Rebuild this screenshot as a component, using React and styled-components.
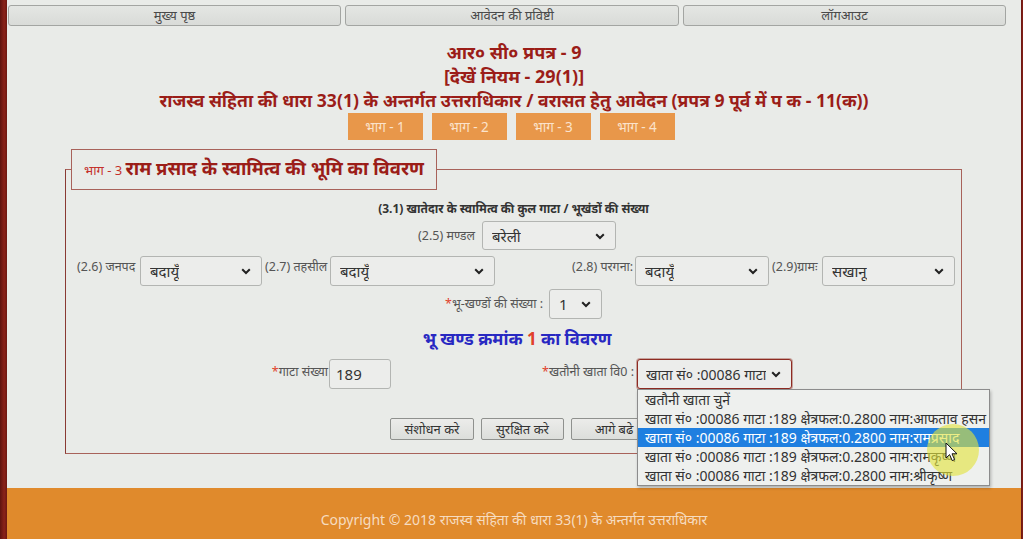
import React from "react";
import styled, { createGlobalStyle } from "styled-components";

const GlobalStyle = createGlobalStyle`
  html, body {
    margin: 0;
    padding: 0;
    background: #ffffff;
  }
  body {
    font-family: "Noto Sans", "Liberation Sans", sans-serif;
  }
`;

const Screen = styled.div`
  display: flex;
  width: 1024px;
  height: 539px;
  overflow: hidden;
  position: relative;
  background: #ffffff;
`;

const Edge = styled.div`
  width: ${(p) => p.w}px;
  flex-shrink: 0;
  background: linear-gradient(90deg, #5e130f, #8a2219 60%, #6d1812);
`;

const Page = styled.div`
  width: 1014px;
  display: flex;
  flex-direction: column;
  background: #e9ebe8;
`;

const Nav = styled.nav`
  display: grid;
  grid-template-columns: 333px 334px 323px;
  gap: 4px;
  padding: 5px 0 0 1px;
`;

const NavButton = styled.button`
  height: 21px;
  padding: 0;
  border: 1px solid #a3a5a2;
  border-radius: 3px;
  background: linear-gradient(#e4e6e3, #d9dbd8);
  color: #4a4a4a;
  font-family: inherit;
  font-size: 13px;
  line-height: 19px;
`;

const Header = styled.header`
  margin-top: 14px;
  text-align: center;
  color: #9b1d18;
  font-weight: 700;
`;

const TitleLine = styled.div`
  font-size: ${(p) => p.size || 18}px;
  line-height: 24px;
`;

const Tabs = styled.div`
  display: flex;
  justify-content: center;
  gap: 9px;
  margin-top: 1px;
  padding-right: 6px;
`;

const Tab = styled.div`
  width: 75px;
  height: 27px;
  display: flex;
  align-items: center;
  justify-content: center;
  background: #e8974a;
  color: #fbe3cc;
  font-size: 13.5px;
`;

const Fieldset = styled.fieldset`
  margin: 9px 0 0 58px;
  width: 897px;
  box-sizing: border-box;
  height: 305px;
  padding: 0;
  border: 1px solid #a8625a;
  border-left-color: #8a3a33;
  min-width: 0;
`;

const Legend = styled.legend`
  margin-left: 5px;
  padding: 6px 12px 7px 12px;
  border: 1px solid #a8625a;
  color: #9b1d18;
  font-size: 18.5px;
  font-weight: 700;
  line-height: 24px;
`;

const LegendPart = styled.span`
  color: #c4302b;
  font-size: 13px;
  font-weight: 400;
`;

const Caption = styled.div`
  margin-top: 11px;
  text-align: center;
  font-size: 12px;
  font-weight: 700;
  color: #333;
  line-height: 16px;
`;

const CenterRow = styled.div`
  display: flex;
  justify-content: center;
  align-items: center;
  gap: ${(p) => p.gap || 6}px;
  margin-top: ${(p) => p.top || 0}px;
  padding-left: ${(p) => p.shift || 0}px;
`;

const SplitRow = styled.div`
  display: flex;
  justify-content: space-between;
  margin-top: 6px;
  padding: 0 6px 0 11px;
`;

const Group = styled.div`
  display: flex;
  align-items: flex-start;
  gap: ${(p) => p.gap || 3}px;
`;

const Label = styled.span`
  font-size: 12.5px;
  color: #555;
  line-height: 16px;
  padding-top: ${(p) => p.pad ?? 3}px;
  white-space: nowrap;
  width: ${(p) => (p.w ? `${p.w}px` : "auto")};
  text-align: ${(p) => p.align || "left"};
`;

const Star = styled.span`
  color: #e0402a;
`;

const SelectBox = styled.div`
  position: relative;
  width: ${(p) => p.w}px;
  height: ${(p) => p.h || 29}px;
  box-sizing: border-box;
  display: flex;
  align-items: center;
  padding: 0 20px 0 ${(p) => (p.focus ? 8 : 9)}px;
  border: 1px solid ${(p) => (p.focus ? "#8e2b22" : "#b3b5b2")};
  box-shadow: ${(p) => (p.focus ? "0 0 0 1px #c6a39d" : "none")};
  border-radius: 3px;
  background: #ecedeb;
  color: #333;
  font-size: ${(p) => p.fs || 15}px;
  white-space: nowrap;
`;

const Clip = styled.span`
  overflow: hidden;
`;

const Chevron = styled.svg`
  position: absolute;
  right: 10px;
  top: 50%;
  margin-top: -3px;
`;

const TextInput = styled.div`
  width: 62px;
  height: 30px;
  box-sizing: border-box;
  display: flex;
  align-items: center;
  padding-left: 6px;
  border: 1px solid #b3b5b2;
  border-radius: 3px;
  background: #ecedeb;
  color: #333;
  font-size: 15px;
`;

const SubHeading = styled.div`
  margin-top: 8px;
  text-align: center;
  color: #2828c2;
  font-size: 17px;
  font-weight: 700;
  line-height: 24px;
  padding-left: 7px;
`;

const Num = styled.span`
  color: #e0402a;
`;

const KhataRow = styled.div`
  display: flex;
  align-items: flex-start;
  margin-top: 8px;
  padding-left: 201px;
  gap: 151px;
`;

const ActionRow = styled.div`
  display: flex;
  gap: 7px;
  margin-top: 29px;
  padding-left: 324px;
`;

const ActionButton = styled.button`
  width: ${(p) => p.w}px;
  height: 22px;
  padding: 0;
  border: 1px solid #8f918e;
  border-radius: 2px;
  background: linear-gradient(#ececea, #dcdedb);
  color: #333;
  font-family: inherit;
  font-size: 13px;
  line-height: 20px;
`;

const DropList = styled.ul`
  position: absolute;
  top: 30px;
  left: 0;
  width: 351px;
  margin: 0;
  padding: 0;
  list-style: none;
  background: #eef0ee;
  border: 1px solid #8c8c8c;
  box-shadow: 1px 2px 3px rgba(0, 0, 0, 0.25);
  z-index: 5;
`;

const DropItem = styled.li`
  height: 19px;
  line-height: 19px;
  padding-left: 7px;
  font-size: 14px;
  white-space: nowrap;
  overflow: hidden;
  color: ${(p) => (p.active ? "#ffffff" : "#333")};
  background: ${(p) => (p.active ? "#1f7fe0" : "transparent")};
`;

const Anchor = styled.div`
  position: relative;
`;

const Footer = styled.footer`
  margin-top: auto;
  height: 51px;
  display: flex;
  align-items: flex-end;
  justify-content: center;
  padding-bottom: 10px;
  box-sizing: border-box;
  background: #e08a2c;
  color: #f6dcc0;
  font-size: 14px;
`;

const Highlight = styled.div`
  position: absolute;
  left: 927px;
  top: 424px;
  width: 52px;
  height: 52px;
  border-radius: 50%;
  background: rgba(226, 228, 60, 0.62);
  z-index: 6;
  pointer-events: none;
`;

const Pointer = styled.svg`
  position: absolute;
  left: 945px;
  top: 442px;
  z-index: 7;
`;

const ChevronIcon = () => (
  <Chevron width="10" height="7" viewBox="0 0 10 7">
    <path d="M1.2 1.2 L5 5 L8.8 1.2" fill="none" stroke="#222" strokeWidth="2" />
  </Chevron>
);

const Select = ({ w, h, fs, value, focus }) => (
  <SelectBox w={w} h={h} fs={fs} focus={focus}>
    <Clip>{value}</Clip>
    <ChevronIcon />
  </SelectBox>
);

const khataOptions = [
  "खतौनी खाता चुनें",
  "खाता सं० :00086 गाटा :189 क्षेत्रफल:0.2800 नाम:आफताव हसन",
  "खाता सं० :00086 गाटा :189 क्षेत्रफल:0.2800 नाम:रामप्रसाद",
  "खाता सं० :00086 गाटा :189 क्षेत्रफल:0.2800 नाम:रामकृष्ण",
  "खाता सं० :00086 गाटा :189 क्षेत्रफल:0.2800 नाम:श्रीकृष्ण",
];

export default function App() {
  return (
    <>
      <GlobalStyle />
      <Screen>
        <Edge w={7} />
        <Page>
          <Nav>
            <NavButton>मुख्य पृष्ठ</NavButton>
            <NavButton>आवेदन की प्रविष्टी</NavButton>
            <NavButton>लॉगआउट</NavButton>
          </Nav>

          <Header>
            <TitleLine>आर० सी० प्रपत्र - 9</TitleLine>
            <TitleLine>[देखें नियम - 29(1)]</TitleLine>
            <TitleLine size={17.6}>
              राजस्व संहिता की धारा 33(1) के अन्तर्गत उत्तराधिकार / वरासत हेतु आवेदन (प्रपत्र 9 पूर्व में प क - 11(क))
            </TitleLine>
          </Header>

          <Tabs>
            <Tab>भाग - 1</Tab>
            <Tab>भाग - 2</Tab>
            <Tab>भाग - 3</Tab>
            <Tab>भाग - 4</Tab>
          </Tabs>

          <Fieldset>
            <Legend>
              <LegendPart>भाग - 3 </LegendPart>राम प्रसाद के स्वामित्व की भूमि का विवरण
            </Legend>

            <Caption>(3.1) खातेदार के स्वामित्व की कुल गाटा / भूखंडों की संख्या</Caption>

            <CenterRow top={4} gap={7} shift={6}>
              <Label pad={0} w={58} align="right">
                (2.5) मण्डल
              </Label>
              <Select w={134} value="बरेली" />
            </CenterRow>

            <SplitRow>
              <Group>
                <Label w={60}>(2.6) जनपद</Label>
                <Select w={122} h={30} value="बदायूँ" />
                <Label w={62}>(2.7) तहसील</Label>
                <Select w={165} h={30} value="बदायूँ" />
              </Group>
              <Group>
                <Label w={60} align="right">
                  (2.8) परगना:
                </Label>
                <Select w={134} h={30} value="बदायूँ" />
                <Label w={47}>(2.9)ग्रामः</Label>
                <Select w={133} h={30} value="सखानू" />
              </Group>
            </SplitRow>

            <CenterRow top={3} gap={6} shift={9}>
              <Label pad={0} w={109} align="right">
                <Star>*</Star>भू-खण्डों की संख्या :
              </Label>
              <Select w={53} h={30} value="1" />
            </CenterRow>

            <SubHeading>
              भू खण्ड क्रमांक <Num>1</Num> का विवरण
            </SubHeading>

            <KhataRow>
              <Group gap={1}>
                <Label pad={5} w={61} align="right">
                  <Star>*</Star>गाटा संख्या
                </Label>
                <TextInput>189</TextInput>
              </Group>
              <Group gap={3}>
                <Label pad={5} w={92} align="right">
                  <Star>*</Star>खतौनी खाता वि0 :
                </Label>
                <Anchor>
                  <Select w={155} h={30} fs={14} focus value="खाता सं० :00086 गाटा" />
                  <DropList>
                    {khataOptions.map((opt, i) => (
                      <DropItem key={i} active={i === 2}>
                        {opt}
                      </DropItem>
                    ))}
                  </DropList>
                </Anchor>
              </Group>
            </KhataRow>

            <ActionRow>
              <ActionButton w={84}>संशोधन करे</ActionButton>
              <ActionButton w={83}>सुरक्षित करे</ActionButton>
              <ActionButton w={86}>आगे बढे</ActionButton>
            </ActionRow>
          </Fieldset>

          <Footer>Copyright © 2018 राजस्व संहिता की धारा 33(1) के अन्तर्गत उत्तराधिकार</Footer>
        </Page>
        <Edge w={2} />
        <Highlight />
        <Pointer width="14" height="21" viewBox="0 0 14 21">
          <path
            d="M1 1 L1 16 L4.6 12.6 L7.2 18.6 L9.6 17.6 L7 11.8 L12 11.8 Z"
            fill="#ffffff"
            stroke="#111"
            strokeWidth="1"
            strokeLinejoin="round"
          />
        </Pointer>
      </Screen>
    </>
  );
}
